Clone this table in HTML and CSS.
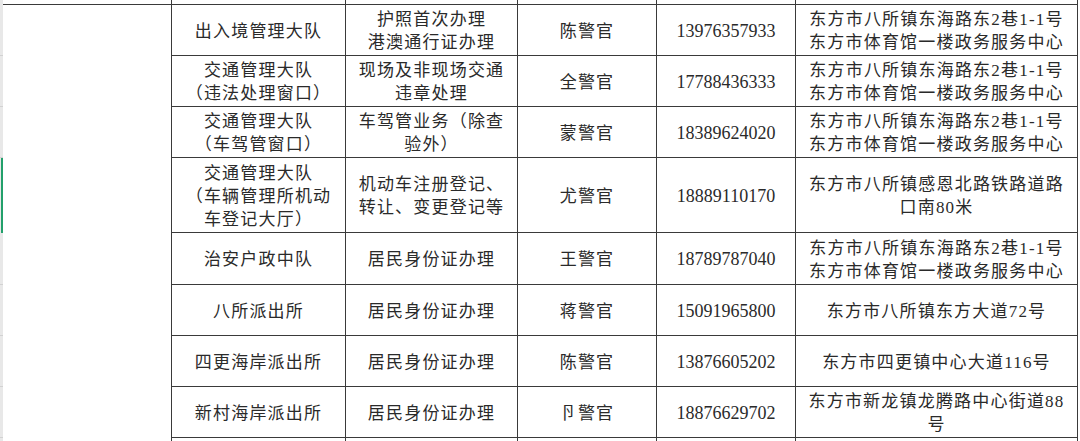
FILE: index.html
```html
<!DOCTYPE html>
<html lang="zh-CN">
<head>
<meta charset="utf-8">
<title>东方市公安局业务窗口</title>
<link rel="stylesheet" href="styles.css">
</head>
<body>
<div class="sheet">
  <div class="hd top"></div>
  <div class="c"></div><div class="c"></div><div class="c"></div><div class="c"></div><div class="c"></div><div class="c"></div>

  <div class="hd"></div>
  <div class="c merged"></div>
  <div class="c">出入境管理大队</div>
  <div class="c">护照首次办理<br>港澳通行证办理</div>
  <div class="c">陈警官</div>
  <div class="c num">13976357933</div>
  <div class="c">东方市八所镇东海路东2巷1-1号<br>东方市体育馆一楼政务服务中心</div>

  <div class="hd"></div>
  <div class="c">交通管理大队<br>（违法处理窗口）</div>
  <div class="c">现场及非现场交通<br>违章处理</div>
  <div class="c">全警官</div>
  <div class="c num">17788436333</div>
  <div class="c">东方市八所镇东海路东2巷1-1号<br>东方市体育馆一楼政务服务中心</div>

  <div class="hd"></div>
  <div class="c">交通管理大队<br>（车驾管窗口）</div>
  <div class="c">车驾管业务（除查<br>验外）</div>
  <div class="c">蒙警官</div>
  <div class="c num">18389624020</div>
  <div class="c">东方市八所镇东海路东2巷1-1号<br>东方市体育馆一楼政务服务中心</div>

  <div class="hd sel"></div>
  <div class="c">交通管理大队<br>（车辆管理所机动<br>车登记大厅）</div>
  <div class="c">机动车注册登记、<br>转让、变更登记等</div>
  <div class="c">尤警官</div>
  <div class="c num">18889110170</div>
  <div class="c">东方市八所镇感恩北路铁路道路<br>口南80米</div>

  <div class="hd"></div>
  <div class="c">治安户政中队</div>
  <div class="c">居民身份证办理</div>
  <div class="c">王警官</div>
  <div class="c num">18789787040</div>
  <div class="c">东方市八所镇东海路东2巷1-1号<br>东方市体育馆一楼政务服务中心</div>

  <div class="hd"></div>
  <div class="c">八所派出所</div>
  <div class="c">居民身份证办理</div>
  <div class="c">蒋警官</div>
  <div class="c num">15091965800</div>
  <div class="c">东方市八所镇东方大道72号</div>

  <div class="hd"></div>
  <div class="c">四更海岸派出所</div>
  <div class="c">居民身份证办理</div>
  <div class="c">陈警官</div>
  <div class="c num">13876605202</div>
  <div class="c">东方市四更镇中心大道116号</div>

  <div class="hd"></div>
  <div class="c">新村海岸派出所</div>
  <div class="c">居民身份证办理</div>
  <div class="c">卪警官</div>
  <div class="c num">18876629702</div>
  <div class="c">东方市新龙镇龙腾路中心街道88<br>号</div>

  <div class="hd"></div>
  <div class="c end"></div><div class="c end"></div><div class="c end"></div><div class="c end"></div><div class="c end"></div>
</div>
</body>
</html>
```

FILE: styles.css
```css
html, body {
  margin: 0;
  padding: 0;
  background: #ffffff;
}
body {
  height: 441px;
  overflow: hidden;
}
.sheet {
  display: grid;
  grid-template-columns: 3px 169px 174px 172px 139px 139px 282px;
  grid-template-rows: 5px 51px 51px 51px 75px 52px 51px 51px 51px 10px;
  font-family: "Liberation Serif", "Noto Sans CJK SC", serif;
  font-size: 17px;
  letter-spacing: 1.2px;
  line-height: 23px;
  color: #2a2a2a;
}
.hd {
  background: #e8e8e8;
  border-bottom: 1px solid #d2d2d2;
  box-sizing: border-box;
}
.hd.top {
  border-bottom: none;
}
.hd.sel {
  border-bottom: none;
  background: linear-gradient(to right, #e8e8e8 1px, #22a06b 1px);
}
.c {
  box-sizing: border-box;
  border-right: 1px solid #3a3a3a;
  border-bottom: 1px solid #3a3a3a;
  display: flex;
  align-items: center;
  justify-content: center;
  text-align: center;
  white-space: nowrap;
  padding-top: 2px;
}
.merged {
  grid-row: span 9;
  border-bottom: none;
}
.num {
  font-size: 18px;
  letter-spacing: 0;
}
.end {
  border-bottom: none;
}
```
